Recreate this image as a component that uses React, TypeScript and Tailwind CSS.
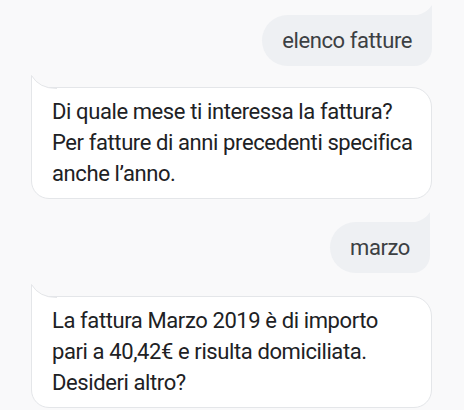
import React from 'react';

const font = { fontFamily: 'Roboto, "Noto Sans", Arial, sans-serif' };

const UserBubble: React.FC<{ text: string; className?: string }> = ({ text, className = '' }) => (
  <div className={`self-end relative flex items-center h-[51px] px-5 bg-[#eef0f3] rounded-l-[26px] rounded-br-[18px] ${className}`}>
    {/* tail */}
    <svg className="absolute right-0 top-[-10px]" width="24" height="11" viewBox="0 0 24 11">
      <path d="M24 11 L24 0 Q17 11 0 11 Z" fill="#eef0f3" />
    </svg>
    <span className="text-[22px] leading-[26px] tracking-[-0.4px] text-[#3c4043]">{text}</span>
  </div>
);

const BotBubble: React.FC<{ lines: string[]; className?: string }> = ({ lines, className = '' }) => (
  <div
    className={`relative mr-8 ml-[31px] bg-white border border-[#e4e6e9] rounded-tr-[20px] rounded-b-[18px] pl-5 pr-4 pt-[8px] pb-[9px] ${className}`}
  >
    {/* tail */}
    <svg className="absolute left-[-1px] top-[-13px]" width="26" height="14" viewBox="0 0 26 14">
      <path d="M0.5 14 L0.5 0.5 Q8 13.5 26 13.5 L26 14 Z" fill="#ffffff" />
      <path d="M0.5 14 L0.5 0.5 Q8 13.5 26 13.5" fill="none" stroke="#e4e6e9" strokeWidth="1" />
    </svg>
    <p className="text-[22px] leading-[31px] tracking-[-0.4px] text-[#202124]">
      {lines.map((l, i) => (
        <React.Fragment key={i}>
          {l}
          {i < lines.length - 1 && <br />}
        </React.Fragment>
      ))}
    </p>
  </div>
);

export default function App() {
  return (
    <div className="w-[464px] h-[410px] overflow-hidden bg-[#f9f9fa]" style={font}>
      <div className="flex flex-col pt-[15px] pr-8">
        <UserBubble text="elenco fatture" />
      </div>
      <div className="flex flex-col">
        <BotBubble
          className="mt-[21px]"
          lines={['Di quale mese ti interessa la fattura?', 'Per fatture di anni precedenti specifica', 'anche l’anno.']}
        />
      </div>
      <div className="flex flex-col pr-[34px]">
        <UserBubble text="marzo" className="mt-[23px]" />
      </div>
      <div className="flex flex-col">
        <BotBubble
          className="mt-[23px]"
          lines={['La fattura Marzo 2019 è di importo', 'pari a 40,42€ e risulta domiciliata.', 'Desideri altro?']}
        />
      </div>
    </div>
  );
}
